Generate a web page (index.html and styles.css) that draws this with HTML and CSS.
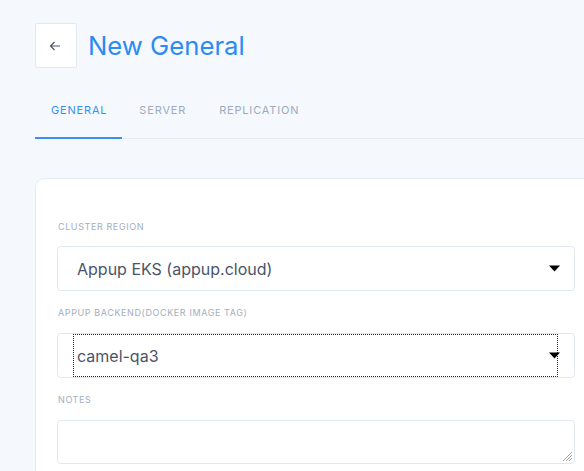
FILE: index.html
```html
<!DOCTYPE html>
<html>
<head>
<meta charset="utf-8">
<link rel="stylesheet" href="styles.css">
</head>
<body>
<div class="page">
  <div class="header">
    <div class="back-btn">
      <svg width="12" height="10" viewBox="0 0 12 10"><path d="M11 5H1.5M5.5 1L1.5 5l4 4" fill="none" stroke="#4a5568" stroke-width="1.2"/></svg>
    </div>
    <h1 class="title">New General</h1>
  </div>
  <div class="tabs">
    <div class="tab active">GENERAL</div>
    <div class="tab">SERVER</div>
    <div class="tab">REPLICATION</div>
  </div>
  <div class="card">
    <div class="label first">CLUSTER REGION</div>
    <div class="select">
      <span class="select-value">Appup EKS (appup.cloud)</span>
      <svg class="arrow" width="11" height="7" viewBox="0 0 11 7"><path d="M0 0.5h11L5.5 6.5z" fill="#000"/></svg>
    </div>
    <div class="label">APPUP BACKEND(DOCKER IMAGE TAG)</div>
    <div class="select">
      <span class="select-value focused">camel-qa3</span>
      <svg class="arrow" width="11" height="7" viewBox="0 0 11 7"><path d="M0 0.5h11L5.5 6.5z" fill="#000"/></svg>
    </div>
    <div class="label">NOTES</div>
    <div class="textarea">
      <svg class="grip" width="10" height="10" viewBox="0 0 10 10"><path d="M10 1L1 10M10 4L4 10M10 7L7 10" stroke="#9a9a9a" stroke-width="0.9"/></svg>
    </div>
  </div>
</div>
</body>
</html>
```

FILE: styles.css
```css
html, body {
  margin: 0;
  padding: 0;
  overflow: hidden;
  background: #f5f9fe;
}
body {
  font-family: Inter, "Noto Sans", sans-serif;
  width: 584px;
  height: 471px;
}
.page {
  padding: 23px 0 0 35px;
}
.header {
  display: flex;
  align-items: center;
  gap: 11px;
}
.back-btn {
  width: 40px;
  height: 43px;
  background: #fff;
  border: 1px solid #e4e9ef;
  border-radius: 2px;
  display: flex;
  align-items: center;
  justify-content: center;
}
.back-btn svg {
  margin-left: -2px;
}
.title {
  margin: 0;
  font-size: 25.7px;
  font-weight: 400;
  color: #2b8bf2;
  line-height: 32px;
}
.tabs {
  display: flex;
  gap: 1px;
  margin-top: 34px;
  border-bottom: 1px solid #e3eaf2;
  width: 600px;
}
.tab {
  font-size: 11px;
  line-height: 16px;
  letter-spacing: 0.82px;
  color: #9ea9bd;
  padding: 0 16px 19px;
  border-bottom: 2px solid transparent;
  margin-bottom: -1px;
}
.tab.active {
  color: #3a8ff0;
  border-bottom-color: #3a8ff0;
  padding-right: 15px;
}
.card {
  margin-top: 39px;
  width: 561px;
  box-sizing: border-box;
  background: #fff;
  border: 1px solid #e1ecf8;
  border-radius: 9px;
  padding: 42px 21px 40px;
}
.label {
  font-size: 9px;
  line-height: 12px;
  letter-spacing: 0.6px;
  color: #a3aec0;
  margin-bottom: 14px;
  padding-left: 1px;
}
.label.first {
  margin-bottom: 13px;
}
.select {
  display: flex;
  align-items: center;
  box-sizing: border-box;
  width: 518px;
  height: 45px;
  border: 1px solid #e2e8f0;
  border-radius: 4px;
  padding: 0 14px 0 15px;
  margin-bottom: 16px;
}
.select-value {
  flex: 1;
  box-sizing: border-box;
  height: 43px;
  display: flex;
  align-items: center;
  padding-left: 3px;
  font-size: 16px;
  color: #4a5568;
  border: 1px dotted transparent;
}
.select-value.focused {
  border-color: #222;
}
.arrow {
  margin-left: -9px;
  flex: none;
}
.textarea {
  box-sizing: border-box;
  width: 518px;
  height: 44px;
  border: 1px solid #e2e8f0;
  border-radius: 4px;
  display: flex;
  justify-content: flex-end;
  align-items: flex-end;
  padding: 0 2px 2px 0;
}
```
